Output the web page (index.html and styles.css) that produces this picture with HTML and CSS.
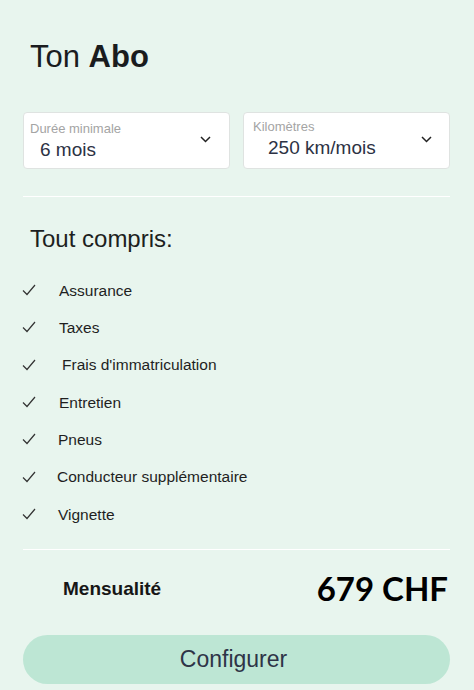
FILE: index.html
```html
<!DOCTYPE html>
<html lang="fr">
<head>
<meta charset="utf-8">
<title>Ton Abo</title>
<link rel="stylesheet" href="styles.css">
</head>
<body>
<main class="panel">
  <h1 class="title">Ton <b>Abo</b></h1>

  <div class="selects">
    <div class="select select-a">
      <div class="select-text">
        <span class="select-label">Durée minimale</span>
        <span class="select-value">6 mois</span>
      </div>
      <svg class="chevron" width="11" height="7" viewBox="0 0 11 7"><path d="M1 1 L5.5 5.5 L10 1" fill="none" stroke="#222" stroke-width="1.5"/></svg>
    </div>
    <div class="select select-b">
      <div class="select-text">
        <span class="select-label">Kilomètres</span>
        <span class="select-value">250 km/mois</span>
      </div>
      <svg class="chevron" width="11" height="7" viewBox="0 0 11 7"><path d="M1 1 L5.5 5.5 L10 1" fill="none" stroke="#222" stroke-width="1.5"/></svg>
    </div>
  </div>

  <hr class="divider divider-top">

  <h2 class="subtitle">Tout compris:</h2>

  <ul class="features">
    <li class="feature"><svg class="check" width="14" height="12" viewBox="0 0 14 12"><path d="M1 6.5 L5 10.5 L13 1" fill="none" stroke="#333" stroke-width="1.2"/></svg><span>Assurance</span></li>
    <li class="feature"><svg class="check" width="14" height="12" viewBox="0 0 14 12"><path d="M1 6.5 L5 10.5 L13 1" fill="none" stroke="#333" stroke-width="1.2"/></svg><span>Taxes</span></li>
    <li class="feature"><svg class="check" width="14" height="12" viewBox="0 0 14 12"><path d="M1 6.5 L5 10.5 L13 1" fill="none" stroke="#333" stroke-width="1.2"/></svg><span class="shift-r">Frais d'immatriculation</span></li>
    <li class="feature"><svg class="check" width="14" height="12" viewBox="0 0 14 12"><path d="M1 6.5 L5 10.5 L13 1" fill="none" stroke="#333" stroke-width="1.2"/></svg><span>Entretien</span></li>
    <li class="feature"><svg class="check" width="14" height="12" viewBox="0 0 14 12"><path d="M1 6.5 L5 10.5 L13 1" fill="none" stroke="#333" stroke-width="1.2"/></svg><span class="shift-l">Pneus</span></li>
    <li class="feature"><svg class="check" width="14" height="12" viewBox="0 0 14 12"><path d="M1 6.5 L5 10.5 L13 1" fill="none" stroke="#333" stroke-width="1.2"/></svg><span class="shift-ll">Conducteur supplémentaire</span></li>
    <li class="feature"><svg class="check" width="14" height="12" viewBox="0 0 14 12"><path d="M1 6.5 L5 10.5 L13 1" fill="none" stroke="#333" stroke-width="1.2"/></svg><span class="shift-l">Vignette</span></li>
  </ul>

  <hr class="divider divider-bottom">

  <div class="total">
    <span class="total-label">Mensualité</span>
    <span class="total-price">679 CHF</span>
  </div>

  <button class="cta" type="button">Configurer</button>
</main>
</body>
</html>
```

FILE: styles.css
```css
* {
  box-sizing: border-box;
}

html, body {
  margin: 0;
  padding: 0;
  background: #e8f5ee;
}

body {
  font-family: "Liberation Sans", Arial, sans-serif;
  color: #1c1c1c;
  width: 474px;
  height: 690px;
  overflow: hidden;
}

.panel {
  padding: 0 24px 0 23px;
}

.title {
  margin: 39px 0 0 7px;
  font-size: 31px;
  line-height: 36px;
  font-weight: 400;
  color: #1a1c1e;
}

.title b {
  font-weight: 700;
}

.selects {
  display: grid;
  grid-template-columns: 207px 207px;
  column-gap: 13px;
  margin-top: 37px;
}

.select {
  height: 57px;
  background: #fff;
  border: 1px solid #dfe3e1;
  border-radius: 4px;
  display: flex;
  align-items: center;
  justify-content: space-between;
}

.select-text {
  display: flex;
  flex-direction: column;
  align-self: flex-start;
}

.select-a .select-text {
  padding: 8px 0 0 6px;
}

.select-b .select-text {
  padding: 6px 0 0 9px;
}

.select-label {
  font-size: 13px;
  line-height: 15px;
  color: #a4a4a4;
}

.select-value {
  font-size: 19px;
  line-height: 22px;
  margin-top: 3px;
  color: #2c3244;
}

.select-a .select-value {
  margin-left: 10px;
}

.select-b .select-value {
  margin-left: 15px;
}

.chevron {
  display: block;
  margin-top: -2px;
}

.select-a .chevron {
  margin-right: 18px;
}

.select-b .chevron {
  margin-right: 17px;
}

.divider {
  border: 0;
  height: 1px;
  background: #ffffff;
  margin: 0;
}

.divider-top {
  margin-top: 27px;
}

.subtitle {
  margin: 28px 0 0 7px;
  font-size: 24px;
  line-height: 28px;
  font-weight: 400;
  color: #1d1f21;
}

.features {
  list-style: none;
  margin: 19px 0 0 0;
  padding: 0;
}

.feature {
  height: 37.33px;
  display: flex;
  align-items: center;
  font-size: 15.5px;
  color: #1f1f1f;
}

.check {
  display: block;
  margin-left: -1px;
  margin-top: -1px;
  flex: none;
}

.feature span {
  margin-left: 23px;
}

.feature .shift-r {
  margin-left: 26px;
}

.feature .shift-l {
  margin-left: 22px;
}

.feature .shift-ll {
  margin-left: 21px;
}

.divider-bottom {
  margin-top: 16px;
}

.total {
  height: 78px;
  display: flex;
  align-items: center;
  justify-content: space-between;
  padding: 0 2px 0 40px;
}

.total-label {
  font-size: 19px;
  font-weight: 700;
  color: #161616;
}

.total-price {
  font-family: Lato, "Liberation Sans", sans-serif;
  font-size: 33px;
  font-weight: 700;
  color: #000;
  margin-top: -3px;
}

.cta {
  display: block;
  width: 427px;
  height: 49px;
  margin-top: 7px;
  border: 0;
  border-radius: 25px;
  background: #bde6d4;
  font-family: "Liberation Sans", Arial, sans-serif;
  font-size: 23px;
  color: #2e3447;
  padding: 0 6px 0 0;
}
```
